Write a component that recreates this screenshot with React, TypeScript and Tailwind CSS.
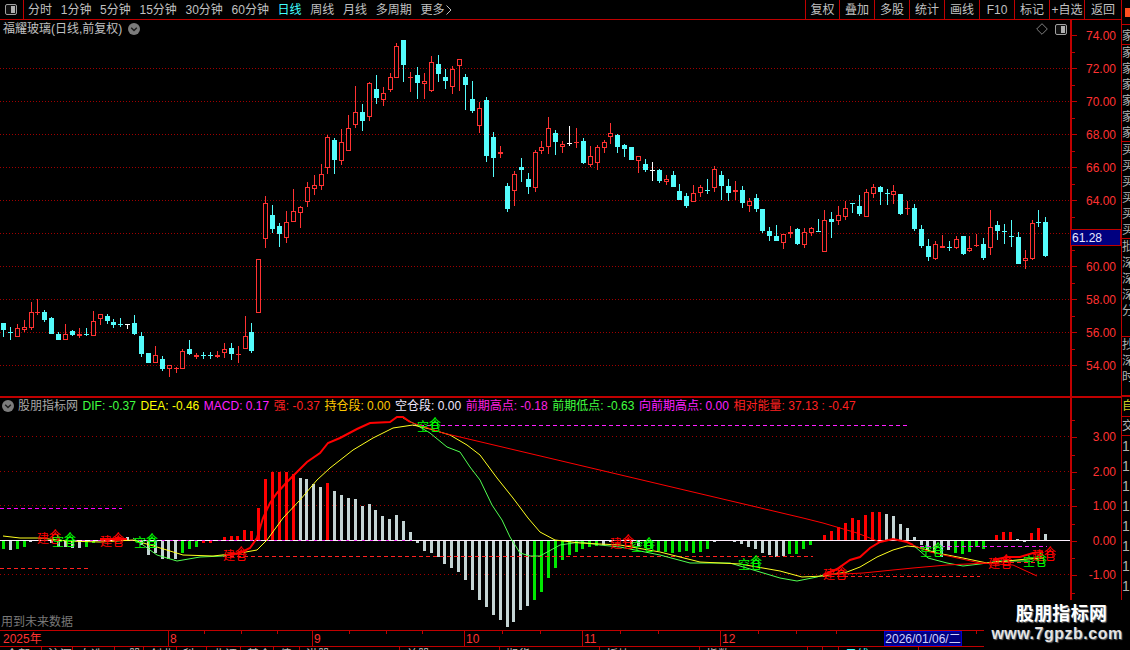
import React from "react";

const RED = "#ff3232";
const CYAN = "#54fcfc";

type C = [number, string, number, number, number, number];
const z6: C[] = [[10,"c",129,129,150,171],[31,"c",141,156,158,180],[52,"r",133,145,170,170],[73,"r",120,142,149,156],[94,"r",66,97,143,150],[112,"r",57,96,99,105],[133,"c",90,97,120,126],[154,"c",111,114,162,162],[175,"c",156,162,180,180],[196,"r",132,163,179,179],[217,"c",151,153,165,168],[238,"r",144,163,167,174],[259,"c",144,163,165,168],[280,"r",93,124,167,167],[301,"r",103,103,117,135],[322,"c",102,108,123,132],[340,"c",117,126,135,144],[361,"c",114,132,134,141],[381,"w",132,132,134,147],[403,"c",105,129,162,165],[424,"c",156,168,222,231],[445,"c",219,219,249,249],[466,"r",198,226,248,248],[487,"c",228,237,267,273],[508,"r",256,256,266,291],[529,"r",261,264,268,279],[547,"r",207,214,266,266],[568,"c",180,207,222,225],[589,"r",219,225,231,237],[610,"c",216,226,228,237],[631,"c",216,226,228,237],[652,"r",213,226,230,234],[673,"r",189,208,220,234],[694,"c",189,205,222,240],[715,"r",198,222,224,249],[736,"r",108,169,206,206],[754,"c",129,156,213,219],[775,"r",-63,-63,98,98]];
const z7: C[] = [[46,"r",498,520,626,654],[67,"c",525,555,597,609],[88,"c",579,588,612,651],[109,"r",543,576,624,639],[130,"r",477,544,575,575],[151,"r",528,531,548,594],[172,"r",456,472,515,531],[193,"r",435,465,477,495],[214,"r",402,432,467,480],[232,"r",315,321,413,432],[253,"c",324,330,390,432],[274,"r",297,336,392,405],[295,"r",255,294,362,362],[316,"r",168,246,285,294],[337,"c",222,246,273,303],[358,"r",156,159,261,273],[379,"c",135,177,204,222],[400,"r",171,189,209,228],[421,"r",129,141,179,186],[439,"r",39,48,143,143],[460,"c",30,30,105,156],[481,"r",126,141,143,186],[502,"c",111,135,159,207],[523,"r",129,153,161,207],[544,"r",78,97,183,186],[565,"c",75,102,132,156],[586,"c",117,141,153,177],[607,"r",108,118,170,192],[628,"r",87,87,107,183],[646,"c",132,141,165,240],[667,"c",153,207,243,249],[688,"r",216,234,287,309],[709,"c",201,210,378,396],[730,"c",306,321,384,441],[751,"r",348,366,371,384],[772,"c",459,468,537,546],[793,"r",423,432,482,528],[814,"c",384,411,420,456],[835,"c",429,447,471,492]];
const z8: C[] = [[106,"r",120,126,233,246],[124,"r",93,111,123,132],[145,"r",21,55,110,132],[166,"c",60,69,96,135],[187,"r",93,102,110,129],[208,"w",48,99,102,108],[229,"r",54,97,100,114],[250,"c",84,93,159,162],[271,"r",108,139,165,171],[292,"r",105,111,159,180],[313,"r",90,97,113,129],[331,"r",39,70,80,102],[352,"c",72,75,111,129],[373,"c",102,105,117,141],[394,"c",111,111,150,150],[415,"r",138,139,152,189],[436,"c",147,162,180,186],[457,"w",156,180,183,213],[478,"c",177,180,213,219],[499,"r",195,208,216,225],[520,"c",183,195,231,231],[538,"c",222,243,270,270],[559,"c",249,258,288,294],[580,"r",225,250,275,275],[601,"r",225,232,248,261],[622,"c",207,240,243,252],[643,"r",168,178,233,246],[664,"c",183,195,228,270],[685,"c",207,228,249,273],[706,"r",213,240,245,270],[727,"c",228,240,279,294],[748,"r",264,274,287,306],[769,"c",252,264,297,306]];
const z9: C[] = [[7,"c",117,117,183,189],[28,"c",171,183,198,213],[49,"c",165,198,213,213],[70,"r",192,192,218,237],[91,"r",168,187,193,204],[112,"c",175,178,222,225],[133,"r",174,187,224,234],[154,"r",171,175,189,198],[175,"c",147,183,186,186],[193,"r",120,151,245,245],[214,"c",126,147,156,204],[235,"r",108,136,152,165],[256,"r",93,115,140,150],[277,"c",99,100,103,129],[298,"c",75,108,132,138],[319,"r",57,67,140,140],[340,"r",42,52,72,84],[361,"c",48,51,66,105],[382,"c",57,69,72,105],[400,"r",45,64,75,102],[421,"c",72,72,132,135],[442,"r",93,115,118,135],[463,"c",102,114,177,183],[484,"c",165,177,228,234],[505,"c",207,228,261,273],[526,"r",213,223,267,269],[547,"r",195,229,233,234],[568,"c",213,231,234,243],[589,"r",198,208,234,237],[610,"c",198,198,252,255],[628,"r",198,233,243,246],[649,"r",192,226,229,231],[670,"c",205,222,264,270],[691,"r",120,172,233,255],[712,"c",153,165,183,210],[733,"c",162,183,186,222],[754,"c",150,198,201,231],[775,"c",186,201,282,282],[796,"r",240,265,272,297],[817,"r",150,160,267,269],[835,"c",120,156,159,171],[856,"c",141,156,259,261]];

function Candle({ c, x0, y0 }: { c: C; x0: number; y0: number }) {
  const [vx, kind, hi, top, bot, lo] = c;
  const x = Math.floor(x0 + vx / 3) + 0.5;
  const py = (v: number) => Math.round(y0 + v / 3);
  const [h, t, b, l] = [py(hi), py(top), py(bot), py(lo)];
  const col = kind === "r" ? RED : kind === "w" ? "#ffffff" : CYAN;
  const thin = b - t <= 2;
  if (kind === "r" && !thin) {
    return (
      <g>
        <rect x={x - 2} y={t + 0.5} width={4} height={b - t - 1} fill="#000" stroke={col} />
        {h < t && <line x1={x} x2={x} y1={h} y2={t} stroke={col} />}
        {l > b && <line x1={x} x2={x} y1={b} y2={l} stroke={col} />}
      </g>
    );
  }
  return (
    <g>
      <line x1={x} x2={x} y1={h} y2={l} stroke={col} />
      <rect x={x - 2.5} y={t} width={5} height={Math.max(1, b - t)} fill={col} />
    </g>
  );
}

const hist: [number, string][] = [
  [549,"g"],[550,"s"],[549,"g"],[547,"g"],[542,"s"],[540,"s"],[541,"s"],[543,"s"],[547,"s"],[547,"s"],[548,"s"],[548,"s"],[547,"g"],[543,"g"],[541,"g"],[542,"s"],[541,"s"],[541,"s"],[537,"s"],[540,"s"],
  [545,"s"],[555,"s"],[553,"s"],[559,"s"],[559,"s"],[559,"s"],[553,"g"],[549,"g"],[547,"g"],[543,"r"],[543,"r"],[541,"s"],[537,"r"],[536,"r"],[536,"r"],[530,"r"],[531,"r"],[508,"r"],[479,"r"],[472,"r"],
  [472,"r"],[472,"r"],[474,"r"],[478,"s"],[479,"s"],[484,"s"],[487,"s"],[483,"r"],[491,"s"],[495,"s"],[498,"s"],[499,"s"],[506,"s"],[504,"s"],[510,"s"],[516,"s"],[519,"s"],[515,"s"],[521,"s"],[532,"s"],
  [543,"s"],[551,"s"],[553,"s"],[557,"s"],[564,"s"],[568,"s"],[572,"s"],[580,"s"],[590,"s"],[600,"s"],[607,"s"],[615,"s"],[620,"s"],[627,"s"],[622,"s"],[610,"s"],[606,"s"],[600,"g"],[592,"g"],[578,"g"],
  [568,"g"],[560,"g"],[555,"g"],[552,"g"],[549,"g"],[547,"g"],[546,"g"],[545,"s"],[542,"s"],[540,"s"],[540,"s"],[544,"s"],[546,"s"],[548,"g"],[549,"g"],[551,"g"],[552,"g"],[553,"g"],[552,"g"],[551,"g"],
  [553,"g"],[552,"g"],[549,"g"],[542,"s"],[541,"s"],[541,"s"],[542,"s"],[544,"s"],[547,"s"],[549,"s"],[553,"s"],[555,"s"],[557,"s"],[556,"s"],[554,"g"],[554,"g"],[549,"g"],[545,"g"],[541,"s"],[535,"r"],
  [531,"r"],[527,"r"],[523,"r"],[518,"r"],[520,"r"],[515,"r"],[512,"r"],[512,"r"],[514,"s"],[516,"s"],[524,"s"],[528,"s"],[537,"s"],[545,"s"],[550,"s"],[553,"s"],[557,"s"],[550,"s"],[553,"g"],[554,"g"],
  [552,"g"],[547,"g"],[549,"g"],[540,"s"],[535,"r"],[532,"r"],[532,"r"],[539,"s"],[542,"s"],[533,"r"],[528,"r"],[534,"s"],
];
const HC: Record<string, string> = { g: "#00e800", s: "#c4d4d4", r: "#ff0000" };

const pts = (a: number[][]) => a.map((p) => p.join(",")).join(" ");
const thick1 = [[226,555],[240,553],[250,548],[257,538],[263,518],[270,503],[277,493],[287,482],[297,472],[307,462],[320,453],[328,443],[340,438],[357,429],[370,423],[390,422],[397,417],[403,417],[410,422]];
const thick2 = [[823,575],[837,569],[850,560],[860,557],[870,548],[880,542],[893,539],[907,542],[913,545]];
const thick3 = [[993,560],[1007,557],[1020,557],[1033,553],[1043,552]];
const thick0 = [[100,539],[127,539]];
const thinRed = [[410,422],[443,433],[803,518],[823,523],[857,533],[880,542]];
const thinRed2 = [[913,545],[930,552],[980,563],[1013,565],[1037,576]];
const thinRed3 = [[823,575],[863,573],[913,568],[947,565],[987,563]];
const green = [[133,538],[143,545],[157,555],[177,561],[200,557],[223,556],[240,553]];
const green2 = [[403,418],[413,423],[430,433],[447,447],[460,452],[470,467],[480,480],[492,505],[502,520],[510,537],[520,553],[530,556],[540,556],[560,545],[580,542],[600,545],[620,547],[660,555],[690,563],[730,563],[760,572],[780,578],[797,581],[817,577],[823,575]];
const green3 = [[913,545],[928,558],[947,563],[963,566],[980,564],[987,563],[1000,561],[1030,561]];
const yellow = [[3,536],[20,538],[40,538],[67,541],[100,542],[133,540],[157,547],[183,555],[213,556],[240,553],[257,550],[267,540],[283,518],[300,500],[317,480],[330,468],[353,450],[373,438],[393,428],[413,425],[430,429],[450,435],[467,445],[480,455],[497,478],[513,498],[528,518],[540,532],[555,540],[580,543],[620,545],[660,552],[700,562],[740,564],[780,571],[802,577],[823,576],[847,572],[860,567],[877,557],[893,550],[907,546],[917,547],[937,553],[963,558],[987,563],[1007,561],[1027,559],[1043,558]];

const markers: [string, number, number, string][] = [
  ["建仓",37,543,"#ff0000"],["空仓",52,546,"#00ff00"],["建仓",100,546,"#ff0000"],["空仓",134,547,"#00ff00"],["建仓",223,560,"#ff0000"],
  ["空仓",417,431,"#00ff00"],["建仓",610,548,"#ff0000"],["空仓",631,551,"#00ff00"],["空仓",738,569,"#00ff00"],["建仓",823,579,"#ff0000"],
  ["空仓",920,556,"#00ff00"],["建仓",988,568,"#ff0000"],["空仓",1023,566,"#00ff00"],["建仓",1032,560,"#ff0000"],
];

const SANS = "Liberation Sans, Noto Sans CJK SC, sans-serif";

function PanelIcon() {
  return (
    <svg width="12" height="11" viewBox="0 0 12 11" className="block">
      <rect x="0.5" y="0.5" width="11" height="10" rx="1.5" fill="#111" stroke="#a0a0a0" />
      <rect x="6" y="2" width="4" height="7" fill="#b0b0b0" />
    </svg>
  );
}
function Chevron() {
  return (
    <svg width="12" height="12" viewBox="0 0 12 12" className="block shrink-0">
      <circle cx="6" cy="6" r="6" fill="#7c7c7c" />
      <path d="M3.2 4.8 L6 7.6 L8.8 4.8" fill="none" stroke="#1c1c1c" strokeWidth="1.4" />
    </svg>
  );
}

const menu = ["分时","1分钟","5分钟","15分钟","30分钟","60分钟","日线","周线","月线","多周期"];
const rightBtns = [["复权",34],["叠加",35],["多股",35],["统计",35],["画线",35],["F10",35],["标记",35],["+自选",35],["返回",37]] as [string, number][];
const priceLabels = ["74.00","72.00","70.00","68.00","66.00","64.00","62.00","60.00","58.00","56.00","54.00"];
const macdLabels = ["3.00","2.00","1.00","0.00","-1.00"];
const months: [string, number][] = [["2025年",168],["8",144],["9",152],["10",118],["11",138],["12",160]];
const tabs: [string, number][] = [["全部",42],["沪深",31],["自选板块",42],["A股",29],["创业",33],["科创",30],["北证",34],["基金",33],["债券",26],["港股",100],["美股",100],["期货",100],["板块",100],["指数",108],["",15],["",16],["日线",80]];
const legends: [string, string][] = [
  ["DIF: -0.37","#40ff40"],["DEA: -0.46","#ffff00"],["MACD: 0.17","#ff20ff"],["强: -0.37","#ff2020"],["持仓段: 0.00","#ffc800"],["空仓段: 0.00","#f0e8ff"],
  ["前期高点: -0.18","#ff20e0"],["前期低点: -0.63","#40ff40"],["向前期高点: 0.00","#ff20ff"],["相对能量: 37.13 : -0.47","#ff2020"],
];

const stripeTop = ["寐","家","家","家","家","家","家","买","买","买","买","买","买","买","批","深","深","深","分","分","抄","深","时"];

export default function App() {
  return (
    <div className="relative flex h-[650px] w-[1130px] overflow-hidden bg-black font-['Liberation_Sans','Noto_Sans_CJK_SC',sans-serif] text-[12px] leading-none text-[#c0c0c0]">
      <div className="flex w-[1121px] flex-col">
        {/* toolbar */}
        <div className="flex h-[20px] items-center justify-between border-b border-[#c00000]">
          <div className="flex h-full items-center">
            <div className="flex h-full w-[24px] items-center justify-center border-r border-[#c00000] pr-[1px]">
              <PanelIcon />
            </div>
            <div className="ml-[4px] flex items-center gap-[8.7px]">
              {menu.map((m) => (
                <span key={m} className={m === "日线" ? "text-[#40ffff]" : ""}>{m}</span>
              ))}
              <span className="flex items-center gap-[2px]">
                更多
                <svg width="6" height="10" viewBox="0 0 6 10"><path d="M0.5 0.5 L5 5 L0.5 9.5" fill="none" stroke="#c0c0c0" /></svg>
              </span>
            </div>
          </div>
          <div className="flex h-full">
            {rightBtns.map(([t, w]) => (
              <div key={t} className="flex h-full items-center justify-center border-l border-[#c00000]" style={{ width: w }}>{t}</div>
            ))}
          </div>
        </div>

        {/* price panel */}
        <div className="flex h-[376px]">
          <div className="relative w-[1070px]">
            <svg className="absolute inset-0" width="1070" height="376" viewBox="0 20 1070 376" shapeRendering="crispEdges">
              {[68,101,134,167,200,233,266,299,332,365].map((y) => (
                <line key={y} x1="0" x2="1070" y1={y + 0.5} y2={y + 0.5} stroke="#a00000" strokeDasharray="1 2" />
              ))}
              {z6.map((c, i) => <Candle key={"a" + i} c={c} x0={0} y0={280} />)}
              {z7.map((c, i) => <Candle key={"b" + i} c={c} x0={250} y0={30} />)}
              {z8.map((c, i) => <Candle key={"c" + i} c={c} x0={500} y0={110} />)}
              {z9.map((c, i) => <Candle key={"d" + i} c={c} x0={760} y0={170} />)}
            </svg>
            <div className="relative flex h-[18px] items-center justify-between pl-[3px] pr-[3px]">
              <div className="flex items-center gap-[6px]">
                <span>福耀玻璃(日线,前复权)</span>
                <Chevron />
              </div>
              <div className="flex items-center gap-[7px]">
                <svg width="12" height="12" viewBox="0 0 12 12"><path d="M6 0.7 L11.3 6 L6 11.3 L0.7 6 Z" fill="none" stroke="#808080" /></svg>
                <PanelIcon />
              </div>
            </div>
          </div>
          <div className="relative w-[51px] border-l-2 border-[#c00000] text-[#ff3232]">
            <div className="-mt-px">
              {priceLabels.map((p) => (
                <div key={p} className="relative flex h-[33px] items-center justify-end pr-[5px]">
                  <span className="absolute left-0 top-0 h-px w-[3px] bg-[#c00000]" />
                  <span className="absolute left-0 top-[16px] h-px w-[5px] bg-[#c00000]" />
                  {p}
                </div>
              ))}
            </div>
            <div className="absolute left-[-2px] right-0 top-[209px] flex h-[17px] items-center border border-[#c00000] bg-[#000080] pl-[1px] text-[#e8e8ff]">61.28</div>
          </div>
        </div>

        <div className="h-[2px] bg-[#c00000]" />

        {/* MACD panel */}
        <div className="flex h-[232px]">
          <div className="relative flex w-[1070px] flex-col justify-between">
            <svg className="absolute inset-0" width="1070" height="232" viewBox="0 398 1070 232">
              <g shapeRendering="crispEdges">
                {[436,471,505,574].map((y) => (
                  <line key={y} x1="0" x2="1070" y1={y + 0.5} y2={y + 0.5} stroke="#a00000" strokeDasharray="1 3" />
                ))}
                {hist.map(([y, c], k) => {
                  const x = Math.floor(3.33 + k * 6.9);
                  return <rect key={k} x={x - 1} y={Math.min(y, 540)} width={3} height={Math.abs(y - 540)} fill={HC[c]} />;
                })}
                <line x1="0" x2="1070" y1="540.5" y2="540.5" stroke="#fff0ff" />
                <line x1="0" x2="122" y1="508.5" y2="508.5" stroke="#ff00ff" strokeDasharray="4 3" />
                <line x1="66" x2="412" y1="540.5" y2="540.5" stroke="#ff40ff" strokeDasharray="3 5" />
                <line x1="413" x2="910" y1="425.5" y2="425.5" stroke="#ff20ff" strokeDasharray="4 3" />
                <line x1="0" x2="88" y1="568.5" y2="568.5" stroke="#ff2020" strokeDasharray="4 3" />
                <line x1="223" x2="813" y1="556.5" y2="556.5" stroke="#ff2020" strokeDasharray="4 3" />
                <line x1="823" x2="980" y1="576.5" y2="576.5" stroke="#ff2020" strokeDasharray="4 3" />
                <line x1="913" x2="1047" y1="546.5" y2="546.5" stroke="#ff20ff" strokeDasharray="4 3" />
                <line x1="1010" x2="1035" y1="562.5" y2="562.5" stroke="#ff2020" strokeDasharray="4 3" />
              </g>
              <polyline points={pts(green)} fill="none" stroke="#50ff50" />
              <polyline points={pts(green2)} fill="none" stroke="#50ff50" />
              <polyline points={pts(green3)} fill="none" stroke="#50ff50" />
              <polyline points={pts(yellow)} fill="none" stroke="#ffff20" />
              <polyline points={pts(thinRed)} fill="none" stroke="#ff0000" />
              <polyline points={pts(thinRed2)} fill="none" stroke="#ff0000" />
              <polyline points={pts(thinRed3)} fill="none" stroke="#ff0000" />
              <polyline points={pts(thick0)} fill="none" stroke="#ff0000" strokeWidth="2" />
              <polyline points={pts(thick1)} fill="none" stroke="#ff0000" strokeWidth="2" />
              <polyline points={pts(thick2)} fill="none" stroke="#ff0000" strokeWidth="2" />
              <polyline points={pts(thick3)} fill="none" stroke="#ff0000" strokeWidth="2" />
              {markers.map(([t, x, y, c], i) => (
                <g key={i} fontFamily={SANS} fontSize="12" fill={c}>
                  <text x={x} y={y}>{t}</text>
                  <text x={x + 12} y={y - 3}>仓</text>
                </g>
              ))}
            </svg>
            <div className="relative flex h-[15px] items-center gap-[4.6px] pl-[2px]">
              <div className="flex items-center gap-[4px] text-[#a8a8a8]"><Chevron />股朋指标网</div>
              {legends.map(([t, c]) => (
                <span key={t} className="whitespace-nowrap" style={{ color: c }}>{t}</span>
              ))}
            </div>
            <div className="relative mb-[2px] pl-[1px] text-[#787878]">用到未来数据</div>
          </div>
          <div className="w-[51px] border-l-2 border-[#c00000] pt-[22px] text-[#ff3232]">
            {[...macdLabels, ""].map((p, i) => (
              <div key={i} className="relative flex h-[34.5px] items-center justify-end pr-[5px]">
                <span className="absolute left-0 top-0 h-px w-[3px] bg-[#c00000]" />
                {p && <span className="absolute left-0 top-[17px] h-px w-[5px] bg-[#c00000]" />}
                {p}
              </div>
            ))}
          </div>
        </div>

        {/* date axis */}
        <div className="relative flex h-[17px] items-center border-y border-[#c00000] text-[#ff3232]">
          {months.map(([t, w], i) => (
            <div key={t} className={`flex h-full items-center ${i ? "border-l border-[#c00000] pl-[1px]" : "pl-[3px]"}`} style={{ width: w }}>{t}</div>
          ))}
          <div className="ml-[4px] flex h-[15px] w-[78px] items-center justify-center border border-[#0000d0] bg-[#000080] text-[#d0d0ff]">2026/01/06/二</div>
          <svg className="absolute left-0 top-0" width="980" height="3">
            {[204,241,277,349,386,422,502,540,620,658,758,796,836,976].map((x) => (
              <line key={x} x1={x + 0.5} x2={x + 0.5} y1="0" y2="3" stroke="#c00000" />
            ))}
          </svg>
        </div>

        {/* bottom tabs, cut by the window */}
        <div className="flex h-[3px] overflow-hidden">
          {tabs.map(([t, w], i) => (
            <div key={i} className={`shrink-0 border-r border-[#c00000] pl-[6px] leading-[16px] ${t === "日线" ? "text-[#40ffff]" : ""}`} style={{ width: w }}>{t}</div>
          ))}
        </div>
      </div>

      {/* right stripe */}
      <div className="flex w-[9px] flex-col overflow-hidden border-l border-[#c00000] text-[#b0b0b0]">
        <div className="h-[25px] border-b border-[#c00000] pl-[3px] pt-[8px]">
          <div className="h-[9px] w-[6px] bg-[#ff5020]" />
        </div>
        <div className="h-[20px] border-b border-[#c00000] pt-[4px] leading-[14px]">家</div>
        {[stripeTop.slice(1, 7), stripeTop.slice(7, 13), stripeTop.slice(14, 19), stripeTop.slice(20)].map((g, i) => (
          <div key={i} className={`${i === 3 ? "h-[59px]" : i === 2 ? "h-[98px]" : "h-[97px]"} border-b border-[#c00000]`}>
            {g.map((ch, j) => <div key={j} className="h-[16px] leading-[16px]">{ch}</div>)}
          </div>
        ))}
        <div className="h-px bg-[#c00000]" />
        <div className="h-[20px] border-b border-[#c00000] pt-[3px] text-[#d0d020]">自</div>
        <div className="h-[19px] border-b border-[#c00000] pt-[3px]">交</div>
        {Array.from({ length: 9 }, (_, i) => (
          <div key={i} className="h-[20px] leading-[20px] text-[14px]">1</div>
        ))}
      </div>

      {/* site watermark */}
      <div className="absolute bottom-0 right-0 flex h-[50px] w-[146px] flex-col items-center bg-black pt-[4px] font-bold">
        <div className="pl-[9px] text-[18px] leading-[20px] tracking-[0.3px] text-white [text-shadow:1px_1px_1px_#777]">股朋指标网</div>
        <div className="mt-0 whitespace-nowrap text-[16px] leading-[20px] tracking-[0.5px] text-[#e4e4e4] [text-shadow:1px_1px_1px_#666]">www.7gpzb.com</div>
      </div>
    </div>
  );
}
